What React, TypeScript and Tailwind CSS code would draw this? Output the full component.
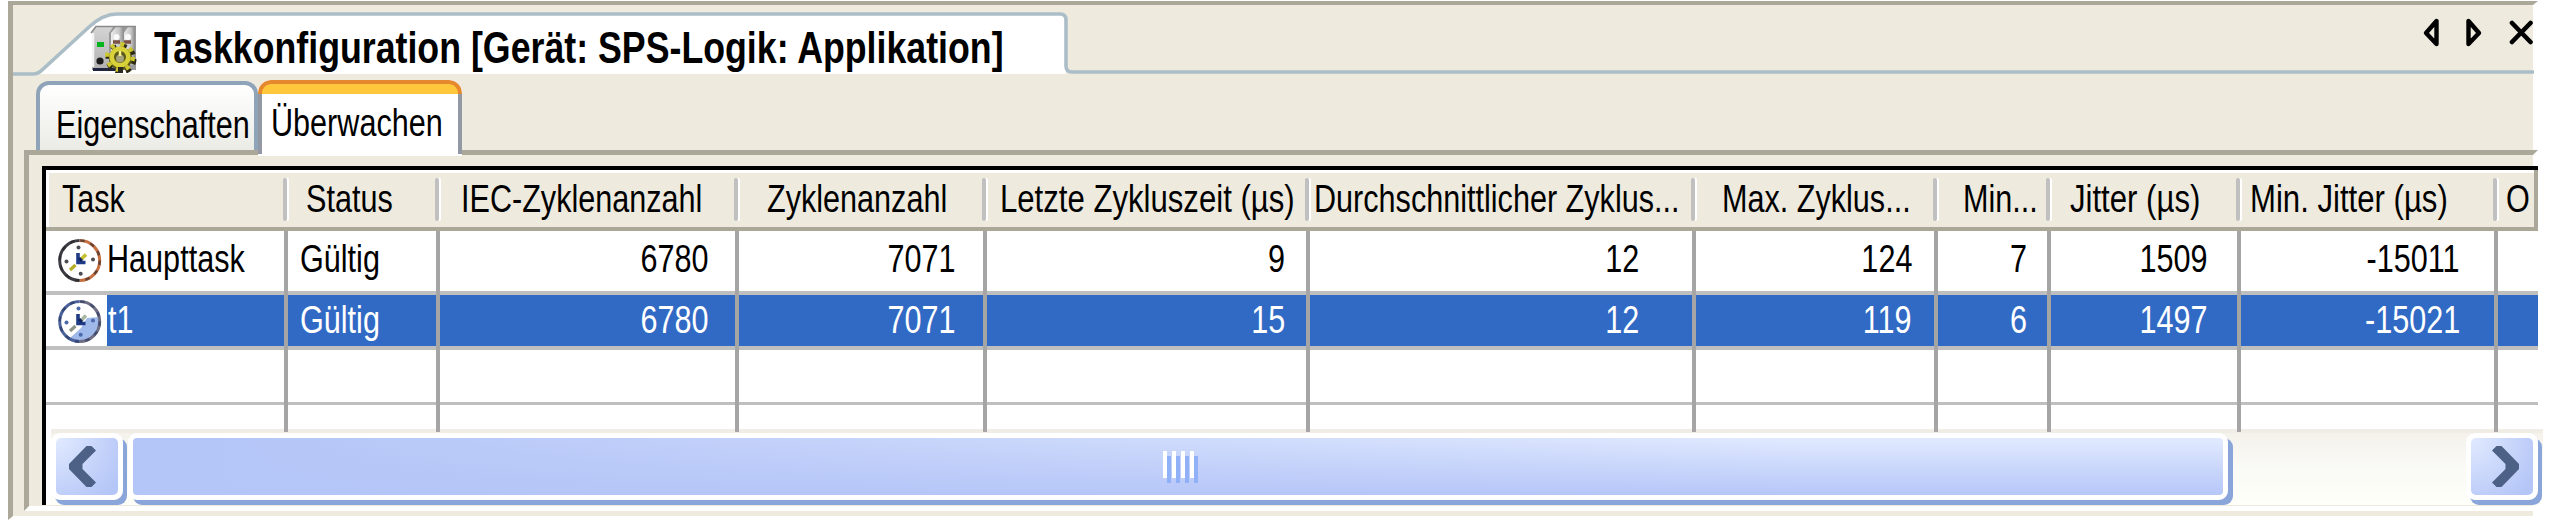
import clsx from "clsx";

type Column = {
  title: string;
  width: string;
  headPad: string;
  cellPad: string;
};

const columns: Column[] = [
  { title: "Task", width: "w-[242px]", headPad: "pl-[16px]", cellPad: "" },
  { title: "Status", width: "w-[152px]", headPad: "pl-[18px]", cellPad: "pl-[12px]" },
  { title: "IEC-Zyklenanzahl", width: "w-[299px]", headPad: "pl-[21px]", cellPad: "pr-[26px]" },
  { title: "Zyklenanzahl", width: "w-[248px]", headPad: "pl-[28px]", cellPad: "pr-[27px]" },
  { title: "Letzte Zykluszeit (µs)", width: "w-[323px]", headPad: "pl-[13px]", cellPad: "pr-[21px]" },
  { title: "Durchschnittlicher Zyklus...", width: "w-[386px]", headPad: "pl-[4px]", cellPad: "pr-[53px]" },
  { title: "Max. Zyklus...", width: "w-[242px]", headPad: "pl-[26px]", cellPad: "pr-[22px]" },
  { title: "Min...", width: "w-[113px]", headPad: "pl-[25px]", cellPad: "pr-[20px]" },
  { title: "Jitter (µs)", width: "w-[190px]", headPad: "pl-[19px]", cellPad: "pr-[29px]" },
  { title: "Min. Jitter (µs)", width: "w-[257px]", headPad: "pl-[9px]", cellPad: "pr-[34px]" },
  { title: "O", width: "w-[40px]", headPad: "pl-[8px]", cellPad: "" },
];

const rows = [
  {
    cells: ["Haupttask", "Gültig", "6780", "7071", "9", "12", "124", "7", "1509", "-15011", ""],
    height: "h-[64px]",
    pad: "pt-[9px]",
    line: "border-b-4",
    selected: false,
  },
  {
    cells: ["t1", "Gültig", "6780", "7071", "15", "12", "119", "6", "1497", "-15021", ""],
    height: "h-[55px]",
    pad: "pt-[6px]",
    line: "border-b-4",
    selected: true,
  },
  { cells: [], height: "h-[55px]", pad: "", line: "border-b-3", selected: false },
  { cells: [], height: "h-[27px]", pad: "", line: "", selected: false },
];

function Label({ text, right = false }: { text: string; right?: boolean }) {
  return (
    <span
      className={clsx(
        "block text-[38px] leading-none whitespace-nowrap",
        right ? "origin-right" : "origin-left",
        text.includes("µ") ? "scale-x-[0.819]" : "scale-x-[0.805]"
      )}
    >
      {text}
    </span>
  );
}

function ClockIcon({ selected }: { selected: boolean }) {
  const left = selected ? "#4a619a" : "#3d3c44";
  const right = selected ? "#6d6d84" : "#c67042";
  return (
    <svg viewBox="0 0 46 46" className="h-[46px] w-[46px]">
      <circle cx="22.7" cy="23.5" r="20" fill="#fff" />
      {selected && <path d="M42 19A20 20 0 0 1 13 40L24 30L30 20Z" fill="#9fb9ea" />}
      <path d="M22.7 3.5A20 20 0 0 0 22.7 43.5" fill="none" stroke={left} strokeWidth="3" />
      <path d="M22.7 3.5A20 20 0 0 1 22.7 43.5" fill="none" stroke={right} strokeWidth="3" />
      <circle
        cx="22.7"
        cy="23.5"
        r="20"
        fill="none"
        stroke={selected ? "#27375f" : "#2a2428"}
        strokeWidth="2.6"
        strokeDasharray="4.5 5.97"
        opacity="0.6"
      />
      <g fill={selected ? "#4b69a8" : "#4c4c52"}>
        <circle cx="21.5" cy="10.5" r="2" />
        <circle cx="36" cy="22.5" r="2" />
        <circle cx="9.5" cy="24.5" r="2" />
        <circle cx="23.7" cy="36.7" r="2" />
      </g>
      <path d="M13 33L18.5 28" stroke={selected ? "#8b9484" : "#b3ac24"} strokeWidth="3.2" />
      <path d="M24.5 22L29 17.5" stroke={selected ? "#a9b7a0" : "#c4c02e"} strokeWidth="3.6" />
      <path d="M21 16V25.5H28.5" fill="none" stroke="#1f3b87" strokeWidth="3.6" />
      <path d="M22 21L25 24" stroke="#13245c" strokeWidth="3" />
    </svg>
  );
}

function DeviceIcon() {
  return (
    <svg viewBox="0 0 48 48" className="h-[48px] w-[48px]">
      <defs>
        <linearGradient id="module" x1="0" y1="0" x2="1" y2="0">
          <stop offset="0" stopColor="#ececec" />
          <stop offset="0.65" stopColor="#c4c4c4" />
          <stop offset="1" stopColor="#8a8a8a" />
        </linearGradient>
        <linearGradient id="front" x1="0" y1="0" x2="0" y2="1">
          <stop offset="0" stopColor="#d4d4d4" />
          <stop offset="1" stopColor="#b2b2b2" />
        </linearGradient>
      </defs>
      <path d="M6 2H47V45H3V7Z" fill="#9a9a9a" />
      <path d="M7 2H24L20 8V43H3V7Z" fill="url(#front)" />
      <path d="M4 8V42" stroke="#f4f4f4" strokeWidth="2.5" />
      <path d="M27 2H35V40H22V8Z" fill="url(#module)" />
      <path d="M39 2H46V40H35V8Z" fill="url(#module)" />
      <path d="M4 43H28V46H4Z" fill="#20243c" />
      <path d="M2 8L7 1.5H47" fill="none" stroke="#8a8a8a" strokeWidth="1.5" />
      <circle cx="27.5" cy="12" r="3" fill="#fafafa" />
      <circle cx="39" cy="12" r="3" fill="#fafafa" />
      <path d="M24 17H31M35 17H42" stroke="#7a5146" strokeWidth="3.5" />
      <rect x="8" y="17" width="7" height="5" fill="#00b41e" />
      <circle cx="11" cy="36" r="3.6" fill="#1c1c1c" />
      <circle cx="32" cy="34" r="12.5" fill="none" stroke="#2b2912" strokeWidth="6" strokeDasharray="5 4.82" />
      <circle cx="31.5" cy="33.5" r="11.5" fill="#5c5918" />
      <circle cx="31" cy="32" r="12.8" fill="none" stroke="#cdc62f" strokeWidth="4.5" strokeDasharray="4 6.05" />
      <circle cx="31" cy="32" r="8.3" fill="none" stroke="#d9d13a" strokeWidth="4.6" />
      <circle cx="31" cy="33.5" r="4" fill="#a5a27c" />
      <path d="M31 26V31" stroke="#f8f38a" strokeWidth="2.5" />
      <path d="M29 42H34V48H29Z" fill="#2a2a20" />
    </svg>
  );
}

function NavIcons() {
  return (
    <svg viewBox="0 0 111 34" className="h-[34px] w-[111px]" fill="none" stroke="#000">
      <path d="M14.5 5V28L4 17Z" strokeWidth="4.4" strokeLinejoin="round" />
      <path d="M46.5 5V28L57 17Z" strokeWidth="4.4" strokeLinejoin="round" />
      <path d="M90 7L108.5 26M108.5 7L90 26" strokeWidth="4.6" strokeLinecap="round" />
    </svg>
  );
}

function TitleBar() {
  return (
    <div className="relative h-[71px] w-full shrink-0">
      {/* slanted document tab outline */}
      <svg className="absolute top-0 left-0" width="2522" height="72" viewBox="0 0 2522 72">
        <path
          d="M27 69Q30 67 33 64L77 23Q88 12 103 9H1047Q1053 9 1053 15V69Z"
          fill="#fff"
        />
        <path
          d="M0 69H20Q25 69 29 65L76 22Q90 9 104 9H1047Q1053 9 1053 15V61Q1053 67 1059 67H2521"
          fill="none"
          stroke="#abbec8"
          strokeWidth="3.6"
        />
      </svg>
      <div className="relative flex items-start justify-between">
        <div className="flex pl-[76px]">
          <div className="pt-[20px]">
            <DeviceIcon />
          </div>
          <h1 className="mt-[21px] ml-[17px] origin-left scale-x-[0.812] text-[44px] leading-none font-bold whitespace-nowrap">
            Taskkonfiguration [Gerät: SPS-Logik: Applikation]
          </h1>
        </div>
        <div className="pt-[11px]">
          <NavIcons />
        </div>
      </div>
    </div>
  );
}

function Tabs() {
  return (
    <div className="relative z-10 flex h-[74px] shrink-0 items-start pt-[4px] pl-[23px]">
      <div className="mt-px h-[69px] w-[222px] rounded-t-[13px] border-x-4 border-t-4 border-[#8fa3b9] bg-linear-to-b from-white to-[#ebebe6] pt-[21px] pl-[16px]">
        <Label text="Eigenschaften" />
      </div>
      <div className="h-[76px] w-[204px] overflow-hidden rounded-t-[13px] bg-white">
        <div className="h-[14px] rounded-t-[13px] border-x-4 border-t-4 border-[#e6892e] bg-[#ffc83c]" />
        <div className="h-[60px] border-x-4 border-[#9298a4] pt-[10px] pl-[9px]">
          <Label text="Überwachen" />
        </div>
      </div>
    </div>
  );
}

function GridHeader() {
  return (
    <div className="flex h-[61px] shrink-0 border-r-4 border-b-4 border-[#aca899] bg-[#eeeade] shadow-[inset_3px_3px_0_#ffffff]">
      {columns.map((col) => (
        <div key={col.title} className={clsx("flex shrink-0 justify-between last:w-[36px]", col.width)}>
          <div className={clsx("w-0 pt-[10px]", col.headPad)}>
            <Label text={col.title} />
          </div>
          {col.title !== "O" && (
            <div className="mt-[8px] mr-px h-[43px] w-[4px] rounded-full bg-[#c0c0c0] shadow-[2px_0_0_#ffffff]" />
          )}
        </div>
      ))}
    </div>
  );
}

function GridBody() {
  return (
    <div className="relative z-10">
      {rows.map((row, r) => (
        <div key={r} className={clsx("flex", row.height)}>
          {columns.map((col, c) => (
            <div
              key={col.title}
              className={clsx("shrink-0 border-[#a5a5a5]", col.width, c < 10 && "border-r-4")}
            >
              <div
                className={clsx(
                  "flex h-full items-start border-[#bfbfbf]",
                  row.line,
                  c > 1 && "justify-end",
                  c > 0 && row.pad,
                  col.cellPad,
                  row.selected && c > 0 && "bg-[#316ac5] text-white"
                )}
              >
                {c === 0 && row.cells.length > 0 && (
                  <>
                    <div className={clsx("w-[61px] shrink-0 pl-[11px]", row.selected ? "pt-[3px]" : "pt-[6px]")}>
                      <ClockIcon selected={row.selected} />
                    </div>
                    <div
                      className={clsx(
                        "h-full w-0 grow",
                        row.pad,
                        row.selected && "bg-[#316ac5] pl-px text-white"
                      )}
                    >
                      <Label text={row.cells[0]} />
                    </div>
                  </>
                )}
                {c > 0 && row.cells[c] && <Label text={row.cells[c]} right={c > 1} />}
              </div>
            </div>
          ))}
        </div>
      ))}
    </div>
  );
}

function ScrollButton({ flip = false }: { flip?: boolean }) {
  return (
    <div className="h-[67px] w-[72px] shrink-0 rounded-[9px] border-5 border-white bg-white shadow-[4px_5px_0_#8aa5da]">
      <div
        className={clsx(
          "flex h-full items-center rounded-[5px] bg-[radial-gradient(circle_at_top_left,#e1eaff,#b4c5f7_90%)]",
          flip ? "justify-end pr-[14px]" : "pl-[13px]"
        )}
      >
        <svg viewBox="0 0 27 41" className={clsx("h-[41px] w-[27px]", flip && "-scale-x-100")}>
          <path
            d="M27 4.5L22.5 0H17.5L0 18V23L17.5 41H22.5L27 36.5L13.5 23V18Z"
            fill="#4d6186"
          />
        </svg>
      </div>
    </div>
  );
}

function ScrollBar() {
  return (
    <div className="-mt-[3px] ml-[5px] flex h-[76px] w-[2492px] shrink-0 border-t-4 border-[#efede5] bg-linear-to-b from-[#f5f2ec] via-[#fafaf6] to-[#fefff8]">
      <ScrollButton />
      <div className="ml-[5px] h-[67px] w-[2100px] shrink-0 rounded-[9px] border-5 border-white bg-white shadow-[5px_5px_0_#8aa5da]">
        <div className="flex h-full items-center justify-center rounded-[4px] bg-[linear-gradient(to_right,#b4c5f7_4%,#b4c5f700_80%),linear-gradient(to_bottom,#e1eaff,#b6c6f8)] pb-[4px]">
          <div className="flex gap-[5px]">
            {[0, 1, 2, 3].map((i) => (
              <div key={i} className="h-[27px] w-[4px] bg-white shadow-[4px_5px_0_#90b0f8]" />
            ))}
          </div>
        </div>
      </div>
      <div className="ml-auto pr-[5px]">
        <ScrollButton flip />
      </div>
    </div>
  );
}

export default function App() {
  return (
    <div className="h-[520px] w-[2550px] overflow-hidden bg-white pt-px pl-[8px] font-['Liberation_Sans',Arial,sans-serif] text-black">
      <div className="flex h-[519px] w-[2530px] flex-col border-t-4 border-r-5 border-b-4 border-l-5 border-t-[#aca899] border-r-white border-b-white border-l-[#aca899] bg-[#eeeade]">
        <TitleBar />
        <Tabs />
        <div className="-mr-[5px] ml-[11px] h-[361px] shrink-0 border-5 border-t-[#aca899] border-r-white border-b-white border-l-[#aca899] pt-[11px] pl-[13px]">
          <div className="flex h-[339px] w-[2496px] flex-col border-t-4 border-l-4 border-black bg-white">
            <GridHeader />
            <GridBody />
            <ScrollBar />
          </div>
        </div>
      </div>
    </div>
  );
}
